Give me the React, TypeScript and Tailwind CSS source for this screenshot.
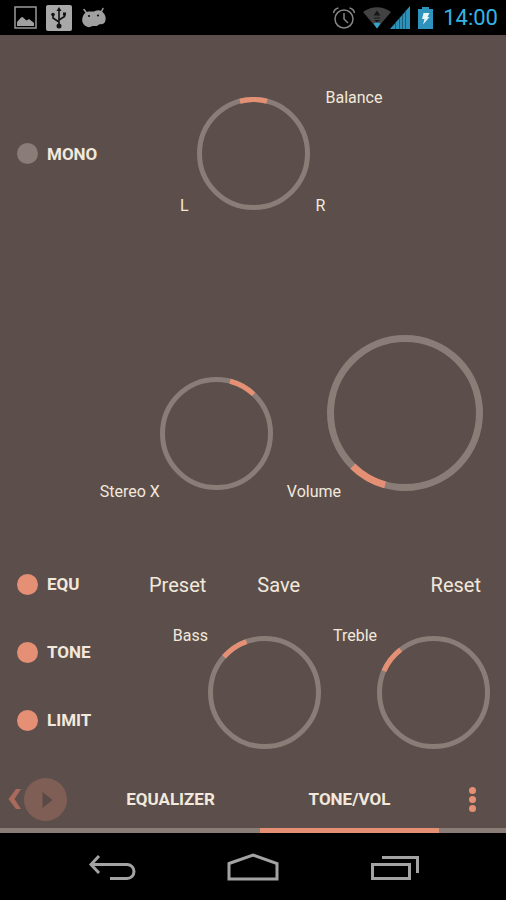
import { useState, FC, ReactNode } from "react";

interface KnobProps {
  label: string;
  angle: number;
  onChange: (angle: number) => void;
  large?: boolean;
}

// The marker covers 29 degrees of the ring, centred on the current angle
const Knob: FC<KnobProps> = ({ label, angle, onChange, large = false }) => {
  const size = large ? 156 : 113;
  const stroke = large ? 7 : 5;
  const center = size / 2;
  const radius = (size - stroke) / 2;

  return (
    <div className="relative shrink-0">
      <svg width={size} height={size} viewBox={`0 0 ${size} ${size}`} fill="none">
        <circle
          cx={center}
          cy={center}
          r={radius}
          stroke="#8a7d78"
          strokeWidth={stroke}
        />
        <circle
          cx={center}
          cy={center}
          r={radius}
          stroke="#e59074"
          strokeWidth={stroke}
          pathLength={360}
          strokeDasharray="29 331"
          transform={`rotate(${angle - 104.5} ${center} ${center})`}
        />
      </svg>
      <input
        type="range"
        id={label}
        min={-150}
        max={150}
        value={angle}
        onChange={(e) => onChange(Number(e.target.value))}
        className="absolute inset-0 w-full h-full opacity-0 cursor-pointer"
      />
    </div>
  );
};

const KnobLabel: FC<{ name: string; className?: string }> = ({
  name,
  className = "",
}) => (
  <label
    htmlFor={name}
    className={`text-[16px] leading-5 whitespace-nowrap ${className}`}
  >
    {name}
  </label>
);

interface ToggleProps {
  label: string;
  checked: boolean;
  onChange: () => void;
}

const Toggle: FC<ToggleProps> = ({ label, checked, onChange }) => (
  <label className="flex items-center gap-[9px] pl-[17px] text-[17px] leading-5 font-bold cursor-pointer">
    <input
      type="checkbox"
      checked={checked}
      onChange={onChange}
      className="appearance-none w-[21px] h-[21px] rounded-full bg-[#8a7d78] checked:bg-[#e59074]"
    />
    {label}
  </label>
);

const StatusBar: FC = () => (
  <header className="flex items-center justify-between h-[35px] bg-black pl-[14px] pr-2">
    <div className="flex items-center gap-[9px]">
      <svg width="23" height="23" viewBox="0 0 23 23" fill="none">
        <rect x="1" y="1" width="21" height="21" stroke="#999" strokeWidth="1.5" />
        <path
          d="M3 20v-4l4-4.5 1.500-.5 4 3.500 2.500-1.500 5 4v3z"
          fill="#a0a0a0"
        />
      </svg>
      <svg width="26" height="26" viewBox="0 0 26 26" fill="none">
        <rect width="26" height="26" rx="2" fill="#a8a8a8" />
        <g stroke="#111" strokeWidth="1.600">
          <path d="M13 20V4M13 17l-6-4V10M13 15l5.500-3.500V9" />
        </g>
        <g fill="#111">
          <path d="M13 2l2.500 4h-5z" />
          <circle cx="13" cy="21" r="2.500" />
          <circle cx="7" cy="9.500" r="1.800" />
          <path d="M17 7.500h3v3h-3z" />
        </g>
      </svg>
      <svg width="26" height="22" viewBox="0 0 26 22">
        <path
          d="M3 2.500l3 4M22 1.500l-2 4"
          stroke="#a0a0a0"
          strokeWidth="1.500"
          strokeLinecap="round"
        />
        <path
          d="M6 5c3-1.500 6 .5 8-1 3-1.500 6-1 8 1.500 2.500 2.500 3.500 6.500 2 9.500-1.500 2.500-4 2-6 2.500-2.500 2.500-4.500 1-6.500 1.500-2.500 1.500-5 1.500-7 0C1.500 17 .5 14 1.500 10.500 2.500 7.500 3.500 6 6 5z"
          fill="#a0a0a0"
        />
        <circle cx="8" cy="9" r="1.100" fill="#111" />
        <circle cx="17" cy="8.500" r="1.100" fill="#111" />
      </svg>
    </div>
    <div className="flex items-center">
      <svg width="24" height="24" viewBox="0 0 24 24" fill="none" stroke="#858585">
        <circle cx="12" cy="13" r="9" strokeWidth="1.500" />
        <path d="M12 7v6l4 4" strokeWidth="1.500" />
        <path d="M1.500 7C2 4.500 4 2.500 6.500 2M22.500 7C22 4.500 20 2.500 17.500 2" strokeWidth="1.500" />
      </svg>
      <svg className="ml-[7px]" width="28" height="22" viewBox="0 0 28 22">
        <path d="M0 5C8-1.500 20-1.500 28 5L14 21.500z" fill="#424242" />
        <path d="M10.500 16.500q3.500-2 7 0L14 21.500z" fill="#33a5cf" />
        <path d="M14 3.500l3.500 5h-7zM11 10.500h6v1h-6zM11 13h6l-3 2.500z" fill="#171717" />
      </svg>
      <svg className="-ml-[1px]" width="20" height="23" viewBox="0 0 20 23">
        <path d="M20 0v23H0z" fill="#2d91b8" />
        <path
          d="M5.500 16v7M9.500 11v12M12.500 8v15M15.500 4v19"
          stroke="#123f50"
          strokeOpacity="0.600"
        />
      </svg>
      <svg className="ml-2" width="15" height="22" viewBox="0 0 15 22">
        <path d="M4 0h7v2h4v20H0V2h4z" fill="#2d93bd" />
        <path d="M5.500 6h6L9.500 10h2L5 17.500l1.500-5.500H4z" fill="#e8f4f8" />
      </svg>
      <span className="ml-[10px] text-[22px] leading-6 text-[#33b5e5]">14:00</span>
    </div>
  </header>
);

const NavButton: FC<{ label: string; children: ReactNode }> = ({
  label,
  children,
}) => (
  <button
    type="button"
    aria-label={label}
    className="flex items-center justify-center w-[28%] cursor-pointer"
  >
    <svg
      width="52"
      height="30"
      viewBox="0 0 52 30"
      fill="none"
      stroke="#a3a3a3"
      strokeWidth="3"
    >
      {children}
    </svg>
  </button>
);

const tabs = ["EQUALIZER", "TONE/VOL"];

const App: FC = () => {
  const [angles, setAngles] = useState({
    balance: 0,
    stereo: 29,
    volume: -150,
    bass: -34,
    treble: -52,
  });
  const [toggles, setToggles] = useState({
    mono: false,
    equ: true,
    tone: true,
    limit: true,
  });
  const [selectedTab, setSelectedTab] = useState("TONE/VOL");

  return (
    <div className="flex flex-col min-h-screen bg-[#5c4f4b] text-[#f2e8dc] font-[Roboto,sans-serif]">
      <StatusBar />

      <main className="flex-1 pt-[53px] pb-4">
        <section className="grid grid-cols-[1fr_auto_1fr] items-end">
          <div className="flex justify-between h-[128px] pr-2">
            <div className="flex items-center pt-[3px]">
              <Toggle
                label="MONO"
                checked={toggles.mono}
                onChange={() => setToggles({ ...toggles, mono: !toggles.mono })}
              />
            </div>
            <span className="self-end text-[16px] leading-5">L</span>
          </div>
          <div className="pb-[6px]">
            <Knob
              label="Balance"
              angle={angles.balance}
              onChange={(balance) => setAngles({ ...angles, balance })}
            />
          </div>
          <div className="flex flex-col justify-between h-[128px] pl-[6px]">
            <KnobLabel name="Balance" className="pl-[10px]" />
            <span className="text-[16px] leading-5">R</span>
          </div>
        </section>

        <section className="flex items-end justify-end mt-[119px] pr-[23px]">
          <KnobLabel name="Stereo X" />
          <div className="pb-3 mr-[14px]">
            <Knob
              label="Stereo X"
              angle={angles.stereo}
              onChange={(stereo) => setAngles({ ...angles, stereo })}
            />
          </div>
          <KnobLabel name="Volume" className="-mr-[14px]" />
          <div className="pb-[11px]">
            <Knob
              label="Volume"
              angle={angles.volume}
              onChange={(volume) => setAngles({ ...angles, volume })}
              large
            />
          </div>
        </section>

        <section className="flex mt-12">
          <div className="grid grid-rows-3 w-[149px] h-[204px]">
            <Toggle
              label="EQU"
              checked={toggles.equ}
              onChange={() => setToggles({ ...toggles, equ: !toggles.equ })}
            />
            <Toggle
              label="TONE"
              checked={toggles.tone}
              onChange={() => setToggles({ ...toggles, tone: !toggles.tone })}
            />
            <Toggle
              label="LIMIT"
              checked={toggles.limit}
              onChange={() => setToggles({ ...toggles, limit: !toggles.limit })}
            />
          </div>
          <div className="flex-1">
            <div className="flex items-center h-[70px] pr-[25px] text-[20px] leading-6">
              <button type="button" className="cursor-pointer">
                Preset
              </button>
              <button type="button" className="ml-[51px] cursor-pointer">
                Save
              </button>
              <button type="button" className="ml-auto cursor-pointer">
                Reset
              </button>
            </div>
            <div className="flex justify-end mt-[6px] pr-4">
              <KnobLabel name="Bass" />
              <div className="pt-[10px] mr-3">
                <Knob
                  label="Bass"
                  angle={angles.bass}
                  onChange={(bass) => setAngles({ ...angles, bass })}
                />
              </div>
              <KnobLabel name="Treble" />
              <div className="pt-[10px]">
                <Knob
                  label="Treble"
                  angle={angles.treble}
                  onChange={(treble) => setAngles({ ...angles, treble })}
                />
              </div>
            </div>
          </div>
        </section>
      </main>

      <nav className="grid grid-cols-[81px_1fr_1fr_67px] h-[63px]">
        <div className="flex items-center gap-[3px] pl-2 border-b-[5px] border-[#8a7d78]">
          <button type="button" aria-label="Back to player" className="cursor-pointer">
            <svg width="13" height="20" viewBox="0 0 13 20">
              <path d="M8 0h5L6.500 10 13 20H8L.5 10z" fill="#a9695b" />
            </svg>
          </button>
          <button type="button" aria-label="Play" className="cursor-pointer">
            <svg width="43" height="43" viewBox="0 0 43 43">
              <circle cx="21.500" cy="21.500" r="21.500" fill="#7f5f55" />
              <path d="M18.500 14l10 8-10 8z" fill="#5b4945" />
            </svg>
          </button>
        </div>
        {tabs.map((tab) => (
          <button
            key={tab}
            type="button"
            onClick={() => setSelectedTab(tab)}
            className={`border-b-[5px] text-[17px] leading-5 font-bold cursor-pointer ${
              tab === selectedTab ? "border-[#e59074]" : "border-[#8a7d78]"
            }`}
          >
            {tab}
          </button>
        ))}
        <button
          type="button"
          aria-label="Menu"
          className="flex items-center justify-center border-b-[5px] border-[#8a7d78] cursor-pointer"
        >
          <svg width="7" height="25" viewBox="0 0 7 25" fill="#e59074">
            <circle cx="3.500" cy="3.500" r="3.500" />
            <circle cx="3.500" cy="12.500" r="3.500" />
            <circle cx="3.500" cy="21.500" r="3.500" />
          </svg>
        </button>
      </nav>

      <footer className="flex justify-center h-[67px] bg-black">
        <NavButton label="Back">
          <path d="M14 4L6 12.500l8 8.500M6.500 12.500H42a7 7 0 010 14H25" />
        </NavButton>
        <NavButton label="Home">
          <path d="M2 11.500L26 3l24 8.500v15.500H2z" />
        </NavButton>
        <NavButton label="Recent apps">
          <path d="M3.500 12.500h37v14h-37zM13 5.500h35.500V21" />
        </NavButton>
      </footer>
    </div>
  );
};

export default App;
